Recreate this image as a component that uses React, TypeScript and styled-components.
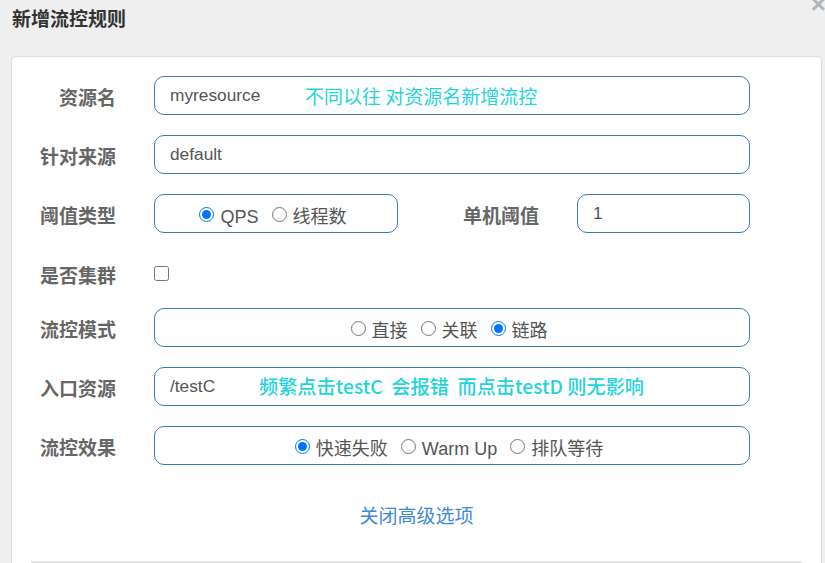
import React from "react";
import styled, { createGlobalStyle } from "styled-components";

const Global = createGlobalStyle`
  html, body { margin: 0; padding: 0; }
  body {
    background: #efefef;
    width: 825px;
    height: 563px;
    overflow: hidden;
    font-family: "Liberation Sans", "Noto Sans CJK SC", sans-serif;
  }
`;

const Page = styled.div`
  width: 825px;
  height: 563px;
  display: flex;
  flex-direction: column;
`;

const Header = styled.div`
  height: 57px;
  display: flex;
  justify-content: space-between;
  align-items: flex-start;
  padding-left: 12px;
  box-sizing: border-box;
`;

const Title = styled.h4`
  margin: 6px 0 0 0;
  font-family: "Noto Sans CJK SC", sans-serif;
  font-size: 19px;
  font-weight: 700;
  line-height: 24px;
  color: #333;
`;

const Close = styled.span`
  margin-top: -9px;
  margin-right: -1px;
  font-family: "Liberation Sans", sans-serif;
  font-size: 26px;
  font-weight: 700;
  line-height: 26px;
  color: #b4b4b4;
`;

const Card = styled.div`
  margin-left: 11px;
  width: 811px;
  flex: 1;
  background: #fff;
  border: 1px solid #dcdcdc;
  border-bottom: none;
  border-radius: 5px 5px 0 0;
  box-sizing: border-box;
  padding: 19px 0 0 0;
  display: flex;
  flex-direction: column;
  gap: 20px;
`;

const Row = styled.div<{ $short?: boolean }>`
  display: flex;
  align-items: center;
  height: ${(p) => (p.$short ? "35px" : "39px")};
  padding-top: ${(p) => (p.$short ? "6px" : "0")};
  box-sizing: border-box;
`;

const Label = styled.label<{ $gapBefore?: number }>`
  width: 104px;
  flex: none;
  margin-left: ${(p) => p.$gapBefore ?? 0}px;
  margin-right: 38px;
  text-align: right;
  font-family: "Noto Sans CJK SC", sans-serif;
  font-size: 19px;
  font-weight: 700;
  color: #666;
  line-height: 24px;
  padding-top: 2px;
`;

const Field = styled.div<{ $width: number }>`
  position: relative;
  width: ${(p) => p.$width}px;
  height: 39px;
  flex: none;
  border: 1px solid #3a7cbd;
  border-radius: 10px;
  box-sizing: border-box;
  display: flex;
  align-items: center;
  background: #fff;
`;

const TextInput = styled.input`
  border: none;
  outline: none;
  background: transparent;
  width: 100%;
  height: 100%;
  padding: 0 0 0 15px;
  box-sizing: border-box;
  font-family: "Liberation Sans", "Noto Sans CJK SC", sans-serif;
  font-size: 17.3px;
  color: #555;
`;

const RadioGroup = styled.div`
  flex: 1;
  display: flex;
  justify-content: center;
  align-items: center;
  gap: 13px;
  padding-right: 6px;
  padding-top: 1px;
`;

const RadioItem = styled.label`
  display: flex;
  align-items: center;
  gap: 6px;
  font-family: "Liberation Sans", "Noto Sans CJK SC", sans-serif;
  font-size: 18px;
  color: #555;
  line-height: 22px;
`;

const RadioText = styled.span`
  padding-top: 5px;
`;

const Radio = styled.input.attrs({ type: "radio" })`
  width: 15px;
  height: 15px;
  margin: 0;
`;

const Check = styled.input.attrs({ type: "checkbox" })`
  width: 15px;
  height: 15px;
  margin: 0;
`;

const Note = styled.span<{ $left: number; $size: number; $weight?: number }>`
  position: absolute;
  left: ${(p) => p.$left}px;
  top: 50%;
  transform: translateY(-52%);
  white-space: pre;
  font-family: "Noto Sans CJK SC", sans-serif;
  font-size: ${(p) => p.$size}px;
  font-weight: ${(p) => p.$weight ?? 400};
  color: #1fd4dc;
  pointer-events: none;
`;

const LinkRow = styled.div`
  margin-top: 18px;
  display: flex;
  justify-content: center;
  height: 24px;
`;

const Link = styled.a`
  font-family: "Noto Sans CJK SC", sans-serif;
  font-size: 19px;
  line-height: 24px;
  color: #3f8ad6;
  text-decoration: none;
`;

const Divider = styled.div`
  margin: 14px 19px 0 19px;
  height: 2px;
  background: #e5e5e5;
`;

const RadioSet: React.FC<{ name: string; options: string[]; checked: number }> = ({
  name,
  options,
  checked,
}) => (
  <RadioGroup>
    {options.map((o, i) => (
      <RadioItem key={o}>
        <Radio name={name} defaultChecked={i === checked} />
        <RadioText>{o}</RadioText>
      </RadioItem>
    ))}
  </RadioGroup>
);

export default function App() {
  return (
    <Page>
      <Global />
      <Header>
        <Title>新增流控规则</Title>
        <Close>×</Close>
      </Header>
      <Card>
        <Row>
          <Label>资源名</Label>
          <Field $width={596}>
            <TextInput defaultValue="myresource" />
            <Note $left={150} $size={19}>不同以往 对资源名新增流控</Note>
          </Field>
        </Row>
        <Row>
          <Label>针对来源</Label>
          <Field $width={596}>
            <TextInput defaultValue="default" />
          </Field>
        </Row>
        <Row>
          <Label>阈值类型</Label>
          <Field $width={244}>
            <RadioSet name="grade" options={["QPS", "线程数"]} checked={0} />
          </Field>
          <Label $gapBefore={37}>单机阈值</Label>
          <Field $width={173}>
            <TextInput defaultValue="1" />
          </Field>
        </Row>
        <Row $short>
          <Label>是否集群</Label>
          <Check />
        </Row>
        <Row>
          <Label>流控模式</Label>
          <Field $width={596}>
            <RadioSet name="strategy" options={["直接", "关联", "链路"]} checked={2} />
          </Field>
        </Row>
        <Row>
          <Label>入口资源</Label>
          <Field $width={596}>
            <TextInput defaultValue="/testC" />
            <Note $left={104} $size={19.2} $weight={500}>
              {"频繁点击testC  会报错  而点击testD 则无影响"}
            </Note>
          </Field>
        </Row>
        <Row>
          <Label>流控效果</Label>
          <Field $width={596}>
            <RadioSet name="behavior" options={["快速失败", "Warm Up", "排队等待"]} checked={0} />
          </Field>
        </Row>
        <LinkRow>
          <Link href="#">关闭高级选项</Link>
        </LinkRow>
        <Divider />
      </Card>
    </Page>
  );
}
